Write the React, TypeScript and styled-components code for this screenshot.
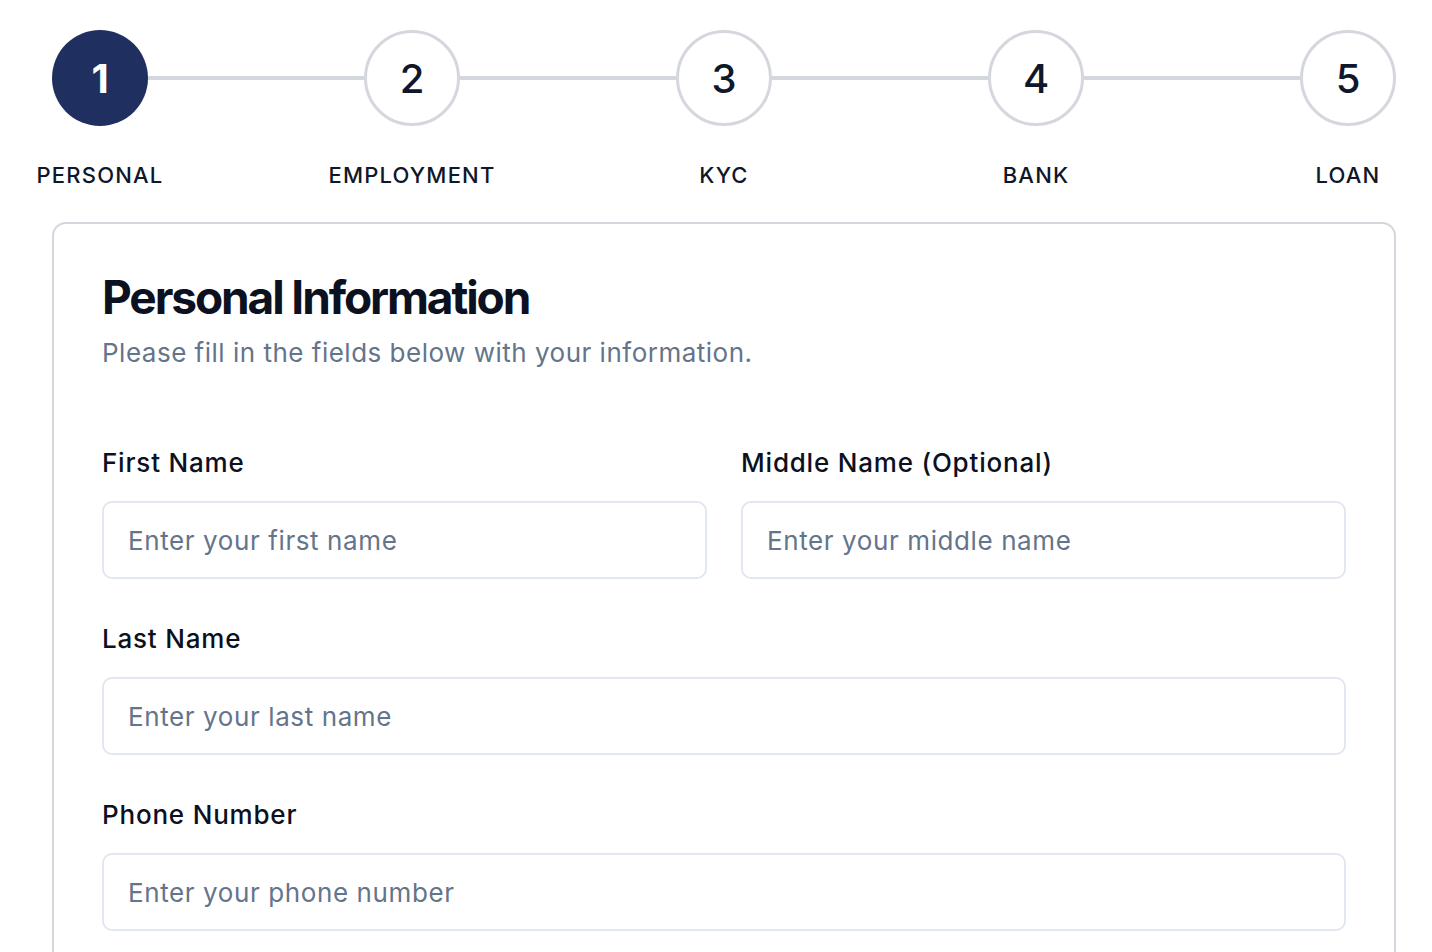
import React from 'react';
import styled, { createGlobalStyle } from 'styled-components';

const GlobalStyle = createGlobalStyle`
  body {
    margin: 0;
    background: #ffffff;
    font-family: Inter, 'Noto Sans', sans-serif;
    color: #0f172a;
  }
  * {
    box-sizing: border-box;
  }
`;

const Page = styled.div`
  width: 1344px;
  margin-left: 52px;
  padding-top: 30px;
`;

const Stepper = styled.div`
  display: flex;
  align-items: flex-start;
`;

const Step = styled.div`
  width: 96px;
  display: flex;
  flex-direction: column;
  align-items: center;
`;

const Circle = styled.div<{ $active?: boolean }>`
  width: 96px;
  height: 96px;
  border-radius: 50%;
  display: flex;
  align-items: center;
  justify-content: center;
  font-size: 40px;
  font-weight: ${(p) => (p.$active ? 700 : 500)};
  background: ${(p) => (p.$active ? '#1f2f5f' : '#ffffff')};
  color: ${(p) => (p.$active ? '#ffffff' : '#0f172a')};
  border: ${(p) => (p.$active ? 'none' : '3px solid #d4d7de')};
`;

const StepLabel = styled.div`
  margin-top: 35px;
  font-size: 22px;
  line-height: 28px;
  font-weight: 500;
  letter-spacing: 1.2px;
  text-transform: uppercase;
  white-space: nowrap;
  color: #0f172a;
`;

const Connector = styled.div`
  flex: 1;
  height: 4px;
  margin-top: 46px;
  background: #d4d7de;
`;

const Card = styled.div`
  margin-top: 33px;
  width: 100%;
  border: 2px solid #d4d7de;
  border-radius: 14px;
  padding: 50px 48px 48px;
`;

const Title = styled.h1`
  margin: 0;
  font-size: 46px;
  line-height: 46px;
  font-weight: 700;
  letter-spacing: -2.1px;
  color: #0b1120;
`;

const Subtitle = styled.p`
  margin: 15px 0 0;
  font-size: 26px;
  line-height: 36px;
  letter-spacing: 0.5px;
  color: #64748b;
`;

const Fields = styled.div`
  margin-top: 74px;
  display: grid;
  grid-template-columns: 1fr 1fr;
  column-gap: 34px;
  row-gap: 42px;
`;

const Field = styled.div<{ $wide?: boolean }>`
  display: flex;
  flex-direction: column;
  gap: 20px;
  grid-column: ${(p) => (p.$wide ? '1 / -1' : 'auto')};
`;

const Label = styled.label`
  font-size: 26px;
  line-height: 36px;
  font-weight: 500;
  letter-spacing: 0.8px;
  color: #0b1120;
`;

const Input = styled.input`
  width: 100%;
  height: 78px;
  border: 2px solid #e2e8f0;
  border-radius: 10px;
  padding: 0 24px;
  font-family: inherit;
  font-size: 26px;
  letter-spacing: 0.6px;
  color: #0f172a;
  background: #ffffff;
  outline: none;

  &::placeholder {
    color: #64748b;
  }
`;

const steps = ['Personal', 'Employment', 'KYC', 'Bank', 'Loan'];

const fields = [
  { label: 'First Name', placeholder: 'Enter your first name' },
  { label: 'Middle Name (Optional)', placeholder: 'Enter your middle name' },
  { label: 'Last Name', placeholder: 'Enter your last name', wide: true },
  { label: 'Phone Number', placeholder: 'Enter your phone number', wide: true },
];

const App = () => {
  return (
    <>
      <GlobalStyle />
      <Page>
        <Stepper>
          {steps.map((s, i) => (
            <React.Fragment key={s}>
              {i > 0 && <Connector />}
              <Step>
                <Circle $active={i === 0}>{i + 1}</Circle>
                <StepLabel>{s}</StepLabel>
              </Step>
            </React.Fragment>
          ))}
        </Stepper>
        <Card>
          <Title>Personal Information</Title>
          <Subtitle>Please fill in the fields below with your information.</Subtitle>
          <Fields>
            {fields.map((f) => (
              <Field key={f.label} $wide={f.wide}>
                <Label>{f.label}</Label>
                <Input type="text" placeholder={f.placeholder} />
              </Field>
            ))}
          </Fields>
        </Card>
      </Page>
    </>
  );
};

export default App;
